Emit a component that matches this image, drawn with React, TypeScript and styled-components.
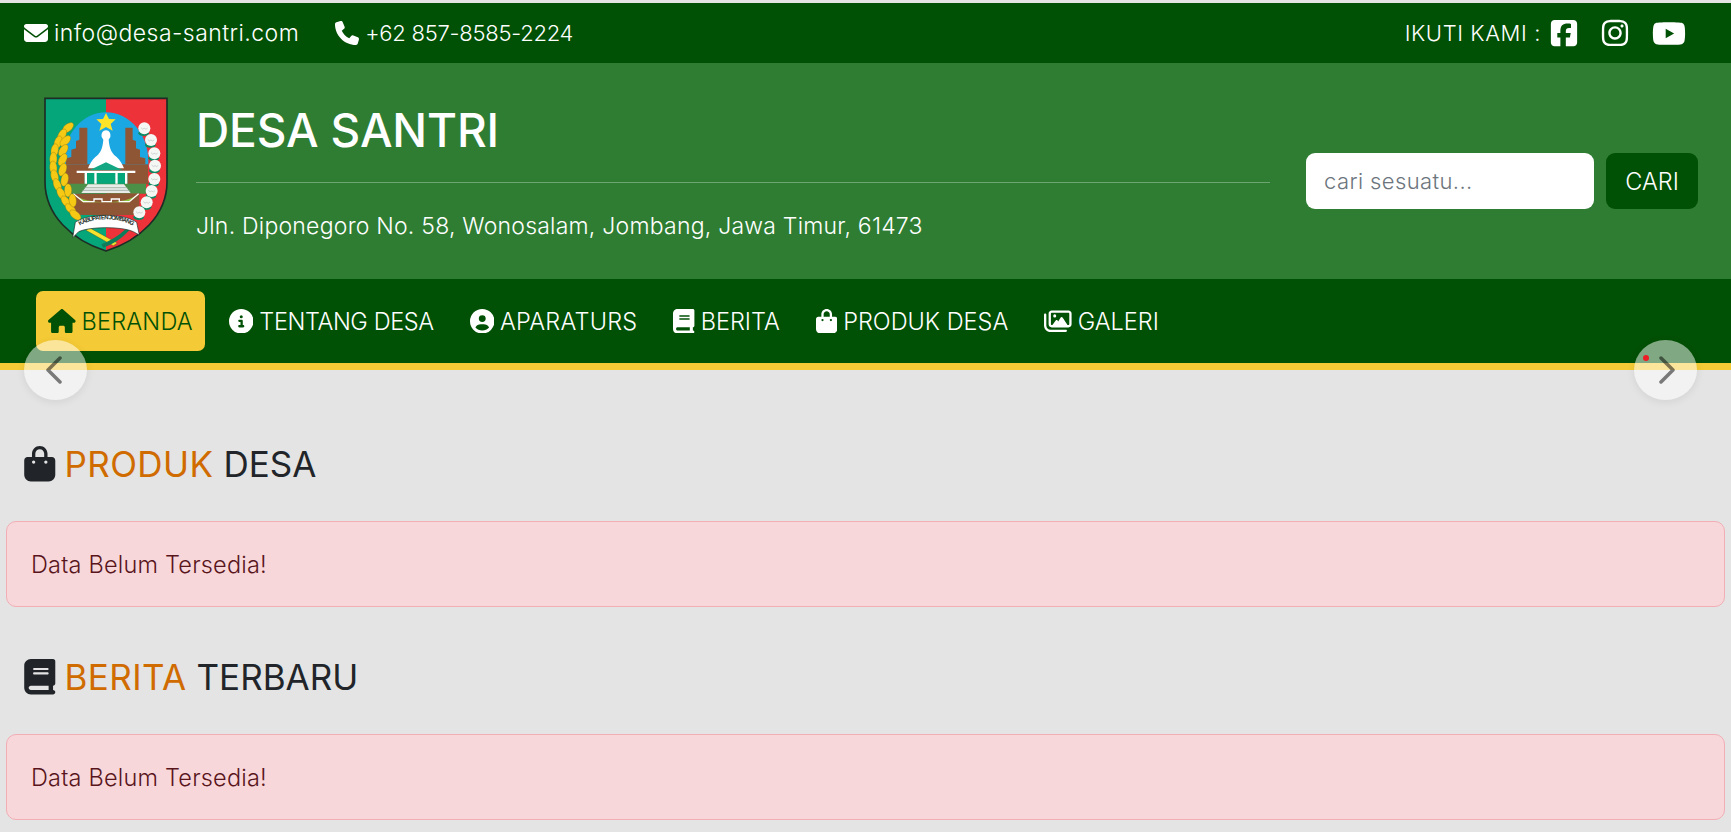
import React from "react";
import styled, { createGlobalStyle } from "styled-components";
import {
  FaEnvelope, FaPhone, FaSquareFacebook, FaInstagram, FaYoutube, FaHouse,
  FaCircleInfo, FaCircleUser, FaBook, FaBagShopping, FaRegImages,
} from "react-icons/fa6";

const Global = createGlobalStyle`
  html, body { margin: 0; padding: 0; overflow: hidden; background: #e4e4e4; }
  body { font-family: Inter, "Liberation Sans", sans-serif; font-weight: 300; }
  * { box-sizing: border-box; }
`;

const Page = styled.div`
  padding-top: 3px;
`;
const TopBar = styled.div`
  height: 60px;
  background: #005005;
  color: #fff;
  display: flex;
  align-items: center;
  justify-content: space-between;
  padding: 0 46px 0 24px;
  font-size: 22px;
`;
const ContactGroup = styled.div`
  display: flex;
  gap: 36px;
`;
const Contact = styled.span<{ $font: number; $spacing: number }>`
  display: flex;
  align-items: center;
  gap: 6px;
  font-size: ${(p) => p.$font}px;
  letter-spacing: ${(p) => p.$spacing}px;
  svg { height: 24px; width: 24px; }
`;
const Social = styled.div`
  display: flex;
  align-items: center;
`;
const SocialLabel = styled.span`
  letter-spacing: 0.6px;
  margin-right: 8px;
`;
const SocialIcon = styled.span`
  display: flex;
  width: 51px;
  font-size: 30px;
  &:last-child { width: 34px; margin-left: 1px; font-size: 35px; margin-right: -1px; }
`;
const Header = styled.header`
  height: 216px;
  background: #2e7d32;
  color: #fff;
  display: flex;
  padding: 34px 33px 0 44px;
`;
const Crest = styled.svg`
  width: 124px;
  height: 156px;
  flex: none;
`;
const Brand = styled.div`
  flex: 1;
  margin-left: 28px;
  padding-top: 3px;
`;
const Title = styled.h1`
  margin: 0;
  font-size: 46px;
  line-height: 60px;
  font-weight: 500;
  letter-spacing: -0.15px;
`;
const Divider = styled.div`
  height: 1px;
  margin-top: 22px;
  background: rgba(255, 255, 255, 0.3);
`;
const Address = styled.div`
  margin-top: 28px;
  font-size: 23px;
  line-height: 30px;
  letter-spacing: 0.23px;
`;
const Search = styled.form`
  display: flex;
  gap: 12px;
  margin: 56px 0 0 36px;
`;
const SearchInput = styled.input`
  width: 288px;
  height: 56px;
  border: 0;
  border-radius: 9px;
  padding: 0 18px;
  font: 300 22px Inter, sans-serif;
  letter-spacing: 0.4px;
  color: #212529;
  &::placeholder { color: #6c757d; opacity: 1; }
`;
const SearchButton = styled.button`
  width: 92px;
  height: 56px;
  border: 0;
  padding: 0;
  border-radius: 9px;
  background: #005005;
  color: #fff;
  font: 300 23.5px Inter, sans-serif;
`;
const Nav = styled.nav`
  height: 91px;
  background: #005005;
  border-bottom: 7px solid #f4ca36;
  display: flex;
  gap: 12px;
  padding: 12px 0 0 36px;
`;
const NavItem = styled.a<{ $active?: boolean; $tracking?: number; $iconWidth: number }>`
  height: 60px;
  padding: 0 12px;
  display: flex;
  align-items: center;
  gap: 6px;
  border-radius: 7px;
  font-size: 23.5px;
  letter-spacing: ${(p) => p.$tracking ?? 0}px;
  color: ${(p) => (p.$active ? "#005005" : "#fff")};
  background: ${(p) => (p.$active ? "#f4ca36" : "transparent")};
  svg { height: 24.5px; width: ${(p) => p.$iconWidth}px; display: block; flex: none; }
`;
const Arrow = styled.div<{ $side: "left" | "right" }>`
  position: absolute;
  top: 340px;
  ${(p) => (p.$side === "left" ? "left: 24px; padding-right: 4px;" : "left: 1634px; padding-left: 4px;")}
  width: 63px;
  height: 60px;
  border-radius: 50%;
  background: rgba(255, 255, 255, 0.5);
  box-shadow: 0 2px 8px rgba(0, 0, 0, 0.08);
  display: flex;
  align-items: center;
  justify-content: center;
`;
const Dot = styled.span`
  position: absolute;
  left: 9px;
  top: 15px;
  width: 6px;
  height: 6px;
  border-radius: 50%;
  background: #ee1c25;
`;
const Main = styled.main`
  padding: 72px 6px 0;
`;
const Heading = styled.h2`
  margin: 0 0 35px;
  height: 44px;
  padding-left: 18px;
  display: flex;
  align-items: center;
  gap: 9px;
  font-size: 35px;
  font-weight: 400;
  color: #212529;
  svg { height: 35.5px; width: 31.5px; flex: none; }
`;
const Accent = styled.span`
  color: #d06b00;
  margin-right: 10px;
  letter-spacing: 0.4px;
`;
const Alert = styled.div`
  height: 86px;
  margin-bottom: 48px;
  padding: 0 24px;
  display: flex;
  align-items: center;
  background: #f8d7da;
  border: 1px solid #f1aeb5;
  border-radius: 10px;
  color: #58151c;
  font-size: 23.5px;
  letter-spacing: 0.2px;
`;

const Chevron = ({ dir }: { dir: "l" | "r" }) => (
  <svg width="17" height="30" viewBox="0 0 17 30" fill="none">
    <path
      d={dir === "l" ? "M15 3 3 15l12 12" : "M2 3l12 12L2 27"}
      stroke="#000"
      strokeOpacity="0.5"
      strokeWidth="3.5"
      strokeLinecap="round"
      strokeLinejoin="round"
    />
  </svg>
);

const leaves = [
  [116, 128, 50], [98, 150, 30], [86, 172, 20], [76, 196, 10], [72, 222, 2], [72, 248, -5],
  [76, 274, -15], [84, 300, -22], [96, 326, -30], [110, 350, -38], [124, 372, -45], [138, 390, -50],
  [108, 168, 45], [102, 196, 35], [100, 224, 30], [100, 254, 20], [106, 284, 12], [116, 316, 0], [130, 346, -8],
];
const cotton = [
  [345, 130], [365, 165], [375, 205], [377, 242], [375, 282], [367, 318], [352, 352], [330, 382],
];

const Logo = () => (
  <Crest viewBox="44 36 372 468">
    <path d="M230 40H47v250c0 100 80 175 183 208Z" fill="#05a67a" />
    <path d="M230 40h183v250c0 100-80 175-183 208Z" fill="#ee3239" />
    <path d="M47 40h366v250c0 100-80 175-183 208C127 465 47 390 47 290Z" fill="none" stroke="#1d2d26" strokeWidth="5" />
    <path d="M104 250C94 150 160 82 230 82s136 68 126 168Z" fill="#1ba8e2" />
    <path d="M150 128h24v110h-64v-18l16-4v-22l14-4v-22l10-4Z" fill="#8f5636" />
    <path d="M310 128h-22v110h60v-18l-16-4v-22l-12-4v-22l-10-4Z" fill="#8f5636" />
    <path d="M108 238h248v60H108Z" fill="#8f5636" />
    <path d="m230 84 9 18 20 1-15 14 6 20-20-11-20 11 6-20-15-14 20-1Z" fill="#fde428" />
    <path d="M230 136c10 0 15 10 13 20l-5 8c2 28 10 42 24 52 10 8 18 24 22 34H176c4-10 12-26 22-34 14-10 22-24 24-52l-5-8c-2-10 3-20 13-20Z" fill="#fff" />
    <path d="M180 256l50-24 50 24Z" fill="#12a683" />
    <path d="M142 257h176v7H142Z" fill="#fff" />
    <path d="M166 264h128v34H166Z" fill="#05a67a" />
    <path d="M166 264h7v34h-7ZM195 264h7v34h-7ZM258 264h7v34h-7ZM287 264h7v34h-7Z" fill="#fff" />
    <path d="M110 296h240v30H110Z" fill="#4c8f47" />
    <path d="M176 298h108l20 26H156Z" fill="#e7ece8" />
    <path d="M165 308h130M158 316h144" stroke="#8a9a90" strokeWidth="2" />
    <path d="M130 326h200v64H130Z" fill="#8f5636" />
    <path d="M134 326c30 34 160 34 192 0l-26 26H160Z" fill="#8cc63f" />
    <path d="M132 326l30 24h32v-8h24v8h28v-8h24v8h30l28-24" fill="none" stroke="#fff" strokeWidth="4" />
    {leaves.map(([x, y, r], i) => (
      <ellipse key={i} cx={x} cy={y} rx="11" ry="20" transform={`rotate(${r} ${x} ${y})`} fill="#f6c915" stroke="#8a7410" strokeWidth="1" />
    ))}
    {cotton.map(([x, y], i) => (
      <g key={i}>
        <ellipse cx={x - 2} cy={y + 15} rx="16" ry="8" fill="#0c8a63" />
        <circle cx={x} cy={y} r="18" fill="#f5f7f5" />
        <path d={`M${x - 10} ${y - 2}q5 8 10 2q5 6 10-1`} fill="none" stroke="#a8b0ac" strokeWidth="1.5" />
      </g>
    ))}
    <path d="M180 428l84 46-12 8-82-46Z" fill="#f5e22e" stroke="#3b3b1a" strokeWidth="1" />
    <path d="M216 478c26-10 50-24 76-48l8 6c-24 26-50 42-78 52Z" fill="#0e7d5a" />
    <path d="M138 412C175 384 285 384 322 412l8 38-18-10C280 424 180 424 148 440l-18 18Z" fill="#fff" stroke="#1d2d26" strokeWidth="2" />
    <defs>
      <path id="ribbon" d="M148 424C185 396 275 396 312 424" />
    </defs>
    <text fontFamily="Liberation Sans, sans-serif" fontSize="18" fontWeight="700" fill="#1d2d26">
      <textPath href="#ribbon" textLength="166" startOffset="4">KABUPATEN JOMBANG</textPath>
    </text>
  </Crest>
);

const navItems: { icon: React.ReactNode; iconWidth: number; label: string; active?: boolean; tracking?: number }[] = [
  { icon: <FaHouse />, iconWidth: 27.6, label: "BERANDA", active: true, tracking: 0.2 },
  { icon: <FaCircleInfo />, iconWidth: 24.5, label: "TENTANG DESA", tracking: -0.4 },
  { icon: <FaCircleUser />, iconWidth: 24.5, label: "APARATURS", tracking: 0.2 },
  { icon: <FaBook />, iconWidth: 21.4, label: "BERITA" },
  { icon: <FaBagShopping />, iconWidth: 21.4, label: "PRODUK DESA" },
  { icon: <FaRegImages />, iconWidth: 27.6, label: "GALERI" },
];

export default function App() {
  return (
    <Page>
      <Global />
      <TopBar>
        <ContactGroup>
          <Contact $font={23} $spacing={0.45}><FaEnvelope />info@desa-santri.com</Contact>
          <Contact $font={22} $spacing={-0.25}><FaPhone />+62 857-8585-2224</Contact>
        </ContactGroup>
        <Social>
          <SocialLabel>IKUTI KAMI :</SocialLabel>
          <SocialIcon><FaSquareFacebook /></SocialIcon>
          <SocialIcon><FaInstagram /></SocialIcon>
          <SocialIcon><FaYoutube /></SocialIcon>
        </Social>
      </TopBar>
      <Header>
        <Logo />
        <Brand>
          <Title>DESA SANTRI</Title>
          <Divider />
          <Address>Jln. Diponegoro No. 58, Wonosalam, Jombang, Jawa Timur, 61473</Address>
        </Brand>
        <Search>
          <SearchInput placeholder="cari sesuatu..." />
          <SearchButton type="button">CARI</SearchButton>
        </Search>
      </Header>
      <Nav>
        {navItems.map((item) => (
          <NavItem key={item.label} $active={item.active} $tracking={item.tracking} $iconWidth={item.iconWidth}>
            {item.icon}
            {item.label}
          </NavItem>
        ))}
      </Nav>
      <Arrow $side="left"><Chevron dir="l" /></Arrow>
      <Arrow $side="right"><Dot /><Chevron dir="r" /></Arrow>
      <Main>
        <Heading><FaBagShopping /><span><Accent>PRODUK</Accent>DESA</span></Heading>
        <Alert>Data Belum Tersedia!</Alert>
        <Heading><FaBook /><span><Accent>BERITA</Accent>TERBARU</span></Heading>
        <Alert>Data Belum Tersedia!</Alert>
      </Main>
    </Page>
  );
}
